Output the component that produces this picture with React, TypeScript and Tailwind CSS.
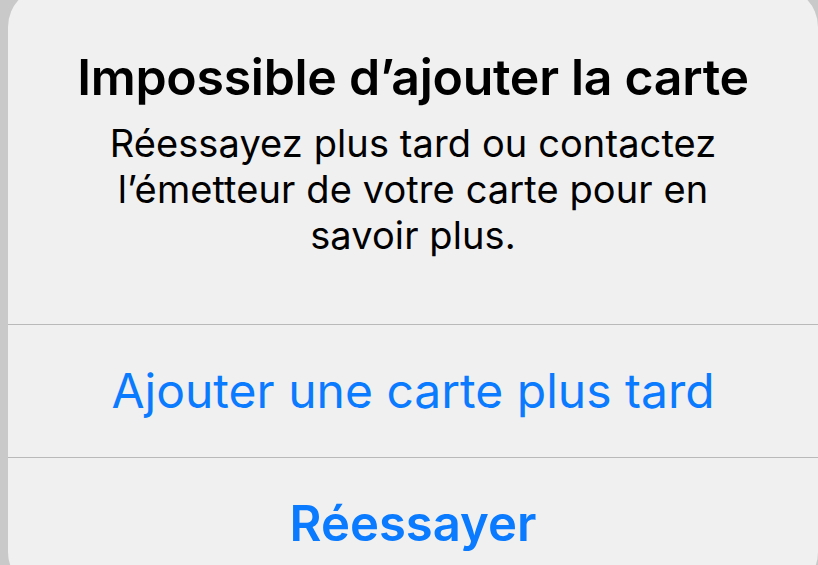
export default function App() {
  return (
    <div className="h-[565px] w-[818px] overflow-hidden bg-[#c9c9c9] pl-[8px]" style={{ fontFamily: 'Inter, "Noto Sans", sans-serif' }}>
      <div className="mt-[-13px] flex h-[605px] w-[810px] flex-col rounded-[40px] bg-[#f0f0f0]">
        <div className="flex h-[337px] flex-col items-center pt-[60px] text-center text-black">
          <div className="text-[50px] font-semibold leading-[60px] tracking-[-0.3px]">Impossible d’ajouter la carte</div>
          <div className="mt-[13px] w-[660px] text-[38px] leading-[46px] tracking-[0.1px]">
            Réessayez plus tard ou contactez l’émetteur de votre carte pour en savoir plus.
          </div>
        </div>
        <div className="h-px bg-[#b9b9b9]" />
        <div className="flex h-[132px] items-center justify-center text-[48px] text-[#0a7aff]">Ajouter une carte plus tard</div>
        <div className="h-px bg-[#b9b9b9]" />
        <div className="flex flex-1 items-center justify-center pb-[2px] text-[49px] font-semibold text-[#0a7aff]">Réessayer</div>
      </div>
    </div>
  );
}
